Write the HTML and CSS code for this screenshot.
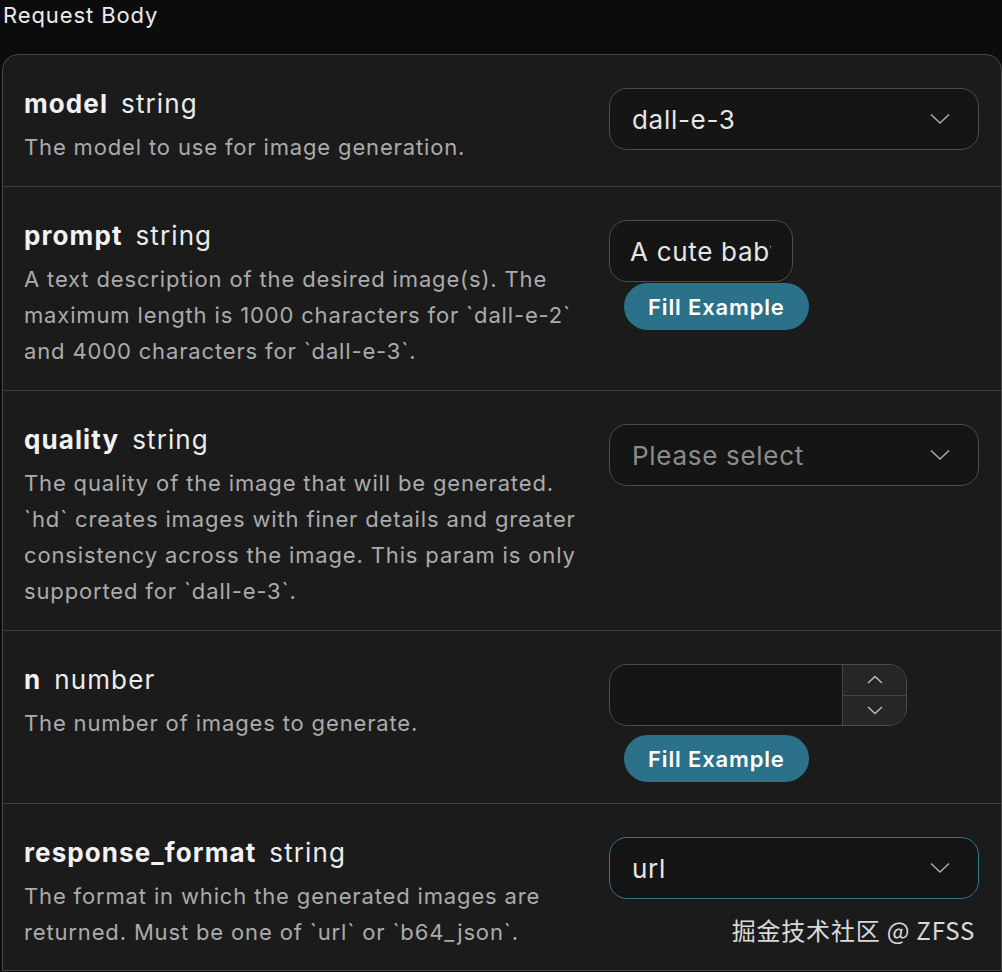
FILE: index.html
```html
<!DOCTYPE html>
<html lang="en">
<head>
<meta charset="utf-8">
<title>Request Body</title>
<link rel="stylesheet" href="styles.css">
</head>
<body>
<div class="heading">Request Body</div>
<div class="card">
  <div class="row">
    <div class="info">
      <div class="title"><span class="name">model</span><span class="type">string</span></div>
      <div class="desc">The model to use for image generation.</div>
    </div>
    <div class="control">
      <div class="select"><span class="value">dall-e-3</span><svg class="chev" width="20" height="12" viewBox="0 0 20 12"><path d="M1 1.5 L10 10 L19 1.5" fill="none" stroke="#a9a9a9" stroke-width="1.6"/></svg></div>
    </div>
  </div>
  <div class="row">
    <div class="info">
      <div class="title"><span class="name">prompt</span><span class="type">string</span></div>
      <div class="desc">A text description of the desired image(s). The maximum length is 1000 characters for `dall-e-2` and 4000 characters for `dall-e-3`.</div>
    </div>
    <div class="control">
      <input class="text-input" type="text" value="A cute baby sea otter">
      <button class="fill">Fill Example</button>
    </div>
  </div>
  <div class="row">
    <div class="info">
      <div class="title"><span class="name">quality</span><span class="type">string</span></div>
      <div class="desc">The quality of the image that will be generated. `hd` creates images with finer details and greater consistency across the image. This param is only supported for `dall-e-3`.</div>
    </div>
    <div class="control">
      <div class="select"><span class="value placeholder">Please select</span><svg class="chev" width="20" height="12" viewBox="0 0 20 12"><path d="M1 1.5 L10 10 L19 1.5" fill="none" stroke="#a9a9a9" stroke-width="1.6"/></svg></div>
    </div>
  </div>
  <div class="row">
    <div class="info">
      <div class="title"><span class="name">n</span><span class="type">number</span></div>
      <div class="desc">The number of images to generate.</div>
    </div>
    <div class="control">
      <div class="number">
        <div class="num-field"></div>
        <div class="spin">
          <div class="spin-btn"><svg width="16" height="9" viewBox="0 0 16 9"><path d="M1 8 L8 1.5 L15 8" fill="none" stroke="#bdbdbd" stroke-width="1.4"/></svg></div>
          <div class="spin-btn"><svg width="16" height="9" viewBox="0 0 16 9"><path d="M1 1 L8 7.5 L15 1" fill="none" stroke="#bdbdbd" stroke-width="1.4"/></svg></div>
        </div>
      </div>
      <button class="fill fill-gap">Fill Example</button>
    </div>
  </div>
  <div class="row last">
    <div class="info">
      <div class="title"><span class="name">response_format</span><span class="type">string</span></div>
      <div class="desc">The format in which the generated images are returned. Must be one of `url` or `b64_json`.</div>
    </div>
    <div class="control">
      <div class="select focused"><span class="value">url</span><svg class="chev" width="20" height="12" viewBox="0 0 20 12"><path d="M1 1.5 L10 10 L19 1.5" fill="none" stroke="#a9a9a9" stroke-width="1.6"/></svg></div>
    </div>
  </div>
  <div class="watermark">掘金技术社区 @ ZFSS</div>
</div>
</body>
</html>
```
FILE: styles.css
```css
* { box-sizing: border-box; }
html, body {
  margin: 0;
  padding: 0;
  background: #0c0c0c;
  font-family: Inter, "Noto Sans", "Noto Sans CJK SC", sans-serif;
  color: #e8e8e8;
  overflow: hidden;
}
.heading {
  font-size: 22px;
  line-height: 30px;
  padding-left: 3px;
  color: #ececec;
  height: 54px;
  letter-spacing: 0.9px;
}
.card {
  position: relative;
  margin-left: 2px;
  width: 1000px;
  background: #1b1b1c;
  border: 1px solid #474747;
  border-radius: 16px 16px 0 0;
}
.row {
  display: grid;
  grid-template-columns: 565px 370px;
  column-gap: 20px;
  padding: 31px 20px 21px 21px;
  border-bottom: 1px solid #3e3e3e;
}
.row.last { border-bottom: none; padding-bottom: 20px; }
.title {
  display: flex;
  align-items: baseline;
  gap: 13px;
  font-size: 26px;
  line-height: 36px;
  letter-spacing: 1.1px;
}
.name { font-weight: 700; color: #f2f2f2; }
.type { font-weight: 400; color: #ececec; }
.desc {
  margin-top: 7px;
  font-size: 22px;
  line-height: 36px;
  color: #ababab;
  letter-spacing: 0.85px;
}
.control {
  margin-top: 2px;
  display: flex;
  flex-direction: column;
  align-items: flex-start;
}
.select {
  width: 370px;
  height: 62px;
  border: 1.5px solid #4c4c4c;
  border-radius: 18px;
  background: #151515;
  display: flex;
  align-items: center;
  justify-content: space-between;
  padding: 0 28px 0 22px;
}
.select.focused { border-color: #2f7791; }
.value {
  font-size: 26px;
  color: #e6e6e6;
  letter-spacing: 0.7px;
}
.value.placeholder { color: #8c8c8c; }
.chev { display: block; }
.text-input {
  width: 184px;
  height: 62px;
  border: 1.5px solid #4c4c4c;
  border-radius: 18px;
  background: #151515;
  color: #e6e6e6;
  font-family: Inter, "Noto Sans", sans-serif;
  font-size: 26px;
  letter-spacing: 0.7px;
  padding: 0 21px 0 20px;
  outline: none;
}
.fill {
  margin-top: 1px;
  margin-left: 15px;
  height: 47px;
  padding: 0 24px;
  border: none;
  border-radius: 24px;
  background: #2b7189;
  color: #ffffff;
  font-family: Inter, "Noto Sans", sans-serif;
  font-size: 22px;
  font-weight: 600;
  letter-spacing: 0.85px;
}
.fill-gap { margin-top: 9px; }
.number {
  width: 298px;
  height: 62px;
  border: 1.5px solid #4c4c4c;
  border-radius: 18px;
  background: #151515;
  display: flex;
  overflow: hidden;
}
.num-field { flex: 1; }
.spin {
  width: 64px;
  border-left: 1.5px solid #444;
  background: #262627;
  display: flex;
  flex-direction: column;
}
.spin-btn {
  flex: 1;
  display: flex;
  align-items: center;
  justify-content: center;
}
.spin-btn + .spin-btn { border-top: 1.5px solid #444; }
.watermark {
  position: absolute;
  right: 26px;
  bottom: 23px;
  font-size: 24px;
  color: #d9d9d9;
  letter-spacing: 0.8px;
  font-family: "Noto Sans CJK SC", sans-serif;
}
```
